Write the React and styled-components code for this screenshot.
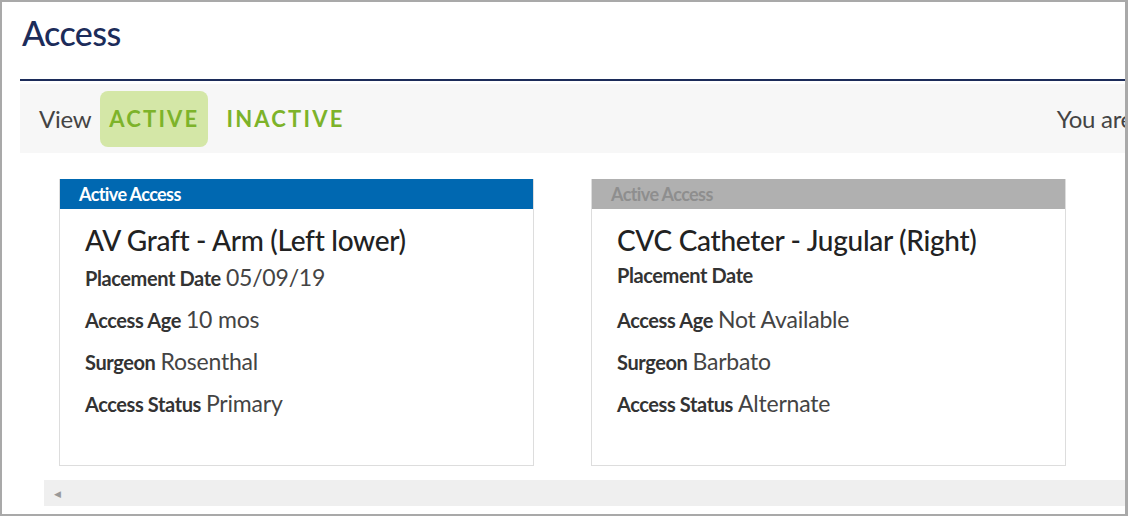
import React from "react";
import styled, { createGlobalStyle } from "styled-components";

const G = createGlobalStyle`
  html,body{margin:0;padding:0;background:#fff;}
  body{font-family:Lato,"Open Sans",sans-serif;color:#333;}
`;
const Frame = styled.div`
  width:1128px;height:516px;box-sizing:border-box;border:2px solid #a9a9a9;
  border-right:3px solid #a9a9a9;overflow:hidden;
`;
const Inner = styled.div`
  margin-left:18px;width:1105px;
`;
const Title = styled.h1`
  margin:0;padding:10px 0 0 2px;height:79px;box-sizing:border-box;
  font-size:34px;font-weight:500;color:#1c2c5a;letter-spacing:-0.6px;
  border-bottom:2px solid #1c2c5a;
`;
const Toolbar = styled.div`
  margin-top:3px;height:69px;background:#f7f7f7;display:flex;align-items:center;
  padding-left:19px;
`;
const ViewLabel = styled.span`font-size:24px;color:#444;margin-right:9px;letter-spacing:-0.3px;`;
const Tab = styled.span`
  font-size:22px;font-weight:700;letter-spacing:2.2px;color:#7db32a;
  padding:0 9px;height:56px;display:flex;align-items:center;border-radius:8px;
  background:${p=>p.$on?"#d4e7a7":"transparent"};margin-right:9px;
`;
const YouAre = styled.span`margin-left:auto;font-size:24px;color:#444;margin-right:-8px;white-space:nowrap;letter-spacing:-0.3px;`;
const Cards = styled.div`
  display:flex;gap:57px;padding:26px 0 0 39px;height:287px;
`;
const Card = styled.div`
  width:475px;height:287px;box-sizing:border-box;border:1px solid #ddd;border-top:none;
`;
const CardHead = styled.div`
  height:30px;background:${p=>p.$active?"#0068b1":"#b0b0b0"};
  color:${p=>p.$active?"#fff":"#8e8e8e"};font-size:18px;font-weight:700;
  line-height:31px;padding-left:19px;letter-spacing:-0.6px;
`;
const CardBody = styled.div`padding:14px 0 0 25px;`;
const CardTitle = styled.div`font-size:28px;font-weight:500;color:#222;margin-bottom:6px;letter-spacing:-0.3px;`;
const Row = styled.div`height:42px;display:flex;align-items:baseline;font-size:23px;color:#444;letter-spacing:-0.2px;`;
const Lbl = styled.b`font-size:20px;color:#333;margin-right:5px;letter-spacing:-0.4px;`;
const Scroll = styled.div`
  margin:14px 0 0 24px;height:26px;background:#efefef;display:flex;align-items:center;
  padding-left:10px;color:#999;font-size:9px;
`;

const data=[
  {active:true,t:"AV Graft - Arm (Left lower)",r:[["Placement Date","05/09/19"],["Access Age","10 mos"],["Surgeon","Rosenthal"],["Access Status","Primary"]]},
  {active:false,t:"CVC Catheter - Jugular (Right)",r:[["Placement Date",""],["Access Age","Not Available"],["Surgeon","Barbato"],["Access Status","Alternate"]]},
];

export default function App(){
  return <Frame><G/><Inner>
    <Title>Access</Title>
    <Toolbar><ViewLabel>View</ViewLabel><Tab $on>ACTIVE</Tab><Tab>INACTIVE</Tab><YouAre>You are</YouAre></Toolbar>
    <Cards>{data.map((d,i)=><Card key={i}>
      <CardHead $active={d.active}>Active Access</CardHead>
      <CardBody><CardTitle>{d.t}</CardTitle>
        {d.r.map(([l,v])=><Row key={l}><Lbl>{l}</Lbl>{v}</Row>)}
      </CardBody></Card>)}</Cards>
    <Scroll>◀</Scroll>
  </Inner></Frame>;
}
